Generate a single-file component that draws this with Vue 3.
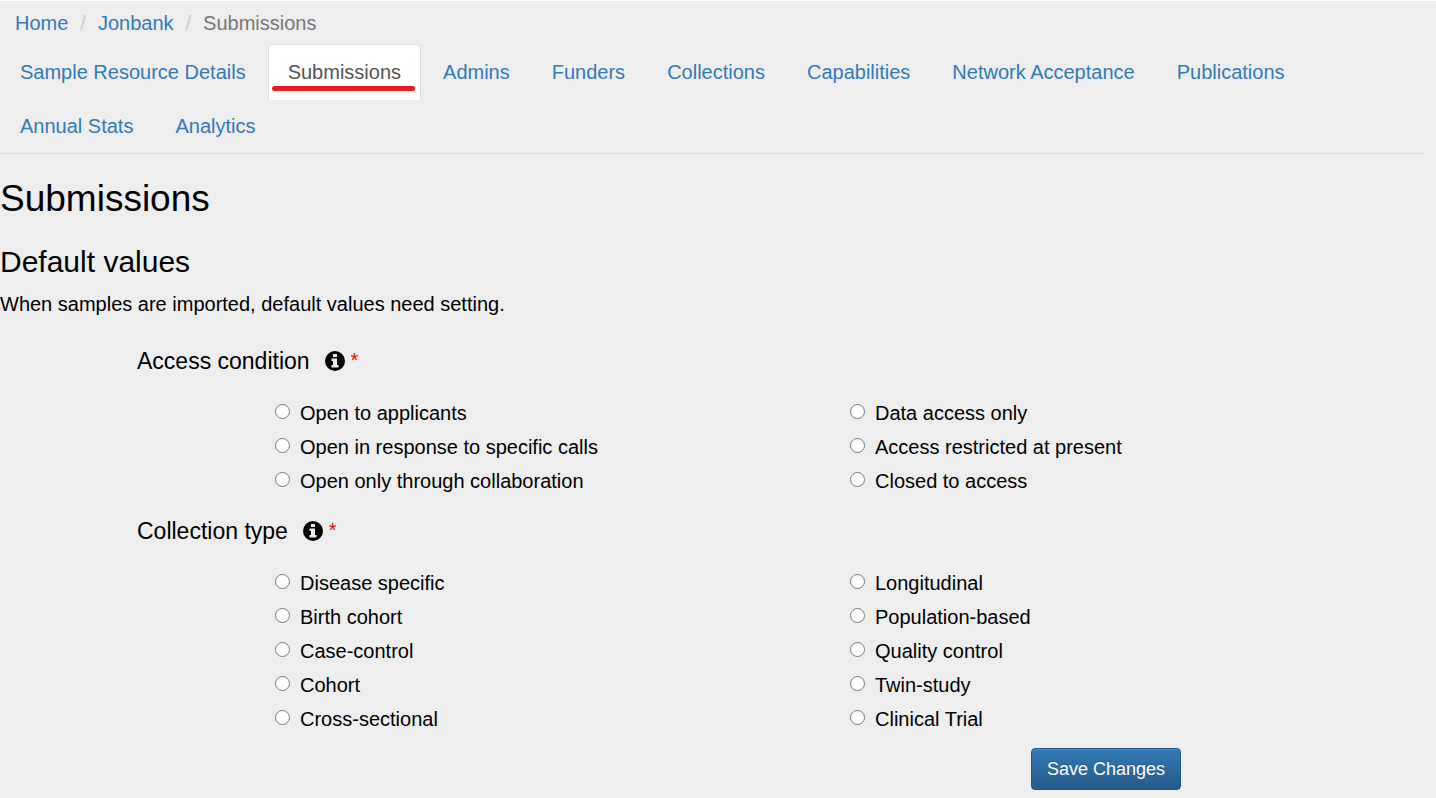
<script setup>
import { ref } from 'vue'

const tabs = [
  'Sample Resource Details',
  'Submissions',
  'Admins',
  'Funders',
  'Collections',
  'Capabilities',
  'Network Acceptance',
  'Publications',
  'Annual Stats',
  'Analytics',
]
const activeTab = 'Submissions'

const groups = [
  {
    name: 'access',
    title: 'Access condition',
    columns: [
      ['Open to applicants', 'Open in response to specific calls', 'Open only through collaboration'],
      ['Data access only', 'Access restricted at present', 'Closed to access'],
    ],
  },
  {
    name: 'type',
    title: 'Collection type',
    columns: [
      ['Disease specific', 'Birth cohort', 'Case-control', 'Cohort', 'Cross-sectional'],
      ['Longitudinal', 'Population-based', 'Quality control', 'Twin-study', 'Clinical Trial'],
    ],
  },
]
const chosen = ref({ access: '', type: '' })
</script>

<template>
  <div class="page">
    <nav aria-label="Breadcrumb">
      <ol class="breadcrumb">
        <li><a href="#">Home</a></li>
        <li><a href="#">Jonbank</a></li>
        <li class="current" aria-current="page">Submissions</li>
      </ol>
    </nav>

    <nav aria-label="Resource sections">
      <ul class="tabs">
        <li v-for="tab in tabs" :key="tab">
          <a href="#" :class="['tab', { active: tab === activeTab }]">{{ tab }}</a>
        </li>
      </ul>
    </nav>

    <main>
      <h1>Submissions</h1>
      <h2>Default values</h2>
      <p class="intro">When samples are imported, default values need setting.</p>

      <form @submit.prevent>
        <fieldset v-for="group in groups" :key="group.name">
          <legend>
            <span>{{ group.title }}</span>
            <svg class="info" viewBox="0 0 20 20" role="img" aria-label="Information">
              <circle cx="10" cy="10" r="10" fill="#000" />
              <path d="M8 3h4v3H8zM6.5 7.5H12V14h1.5v2.5h-7V14H8v-4H6.5z" fill="#eee" />
            </svg>
            <span class="required">*</span>
          </legend>
          <div class="options">
            <div v-for="(column, index) in group.columns" :key="index">
              <label v-for="option in column" :key="option" class="option">
                <input v-model="chosen[group.name]" type="radio" :name="group.name" :value="option" />
                <span>{{ option }}</span>
              </label>
            </div>
          </div>
        </fieldset>
        <div class="actions">
          <button type="submit">Save Changes</button>
        </div>
      </form>
    </main>
  </div>
</template>

<style>
body {
  background: #eee;
}
</style>

<style scoped>
.page {
  border-top: 1px solid #fff;
  padding-right: 11px;
  font-family: "Liberation Sans", Arial, sans-serif;
  font-size: 20px;
  line-height: 28px;
  color: #000;
}
a {
  color: #337ab7;
  text-decoration: none;
}
.breadcrumb {
  display: flex;
  margin: 0;
  padding: 8px 15px 7px;
  list-style: none;
}
.breadcrumb li + li::before {
  content: "/";
  padding: 0 12px;
  color: #ccc;
}
.breadcrumb .current {
  color: #777;
}
.tabs {
  display: flex;
  flex-wrap: wrap;
  margin: 0;
  padding: 0 0 1px;
  list-style: none;
  border-bottom: 1px solid #ddd;
}
.tabs li {
  height: 54px;
  margin-right: 2px;
}
.tab {
  display: block;
  height: 28px;
  padding: 13px 19px;
  border: 1px solid transparent;
  border-bottom: 0;
  border-radius: 5px 5px 0 0;
}
.tab.active {
  position: relative;
  padding-bottom: 14px;
  background: #fff;
  border-color: #ddd;
  color: #555;
}
.tab.active::after {
  content: "";
  position: absolute;
  left: 3px;
  right: 5px;
  bottom: 9px;
  height: 5px;
  border-radius: 3px;
  background: #ea1c1f;
}
h1,
h2 {
  margin: 0;
  font-weight: 400;
}
h1 {
  margin-top: 24px;
  font-size: 37px;
  line-height: 42px;
}
h2 {
  margin-top: 24px;
  font-size: 30px;
  line-height: 36px;
}
.intro {
  margin: 10px 0 29px;
}
fieldset {
  min-width: 0;
  margin: 0 0 19px;
  padding: 0;
  border: 0;
}
fieldset:last-of-type {
  margin-bottom: 12px;
}
legend {
  display: flex;
  align-items: center;
  margin: 0 0 21px 137px;
  padding: 0;
  font-size: 23px;
  line-height: 28px;
}
.info {
  width: 20px;
  height: 20px;
  margin: 0 6px 0 15px;
}
.required {
  padding-bottom: 2px;
  font-size: 20px;
  line-height: 26px;
  color: #f00;
}
.options {
  display: grid;
  grid-template-columns: 1fr 1fr;
  margin-left: 275px;
}
.option {
  display: flex;
  align-items: center;
  gap: 10px;
  height: 34px;
}
.option input {
  width: 15px;
  height: 15px;
  margin: 0 0 4px;
}
.actions {
  display: flex;
  justify-content: flex-end;
  padding-right: 244px;
}
button {
  height: 42px;
  padding: 0 15px;
  border: 1px solid #245580;
  border-radius: 4px;
  background: linear-gradient(#337ab7, #265a88);
  box-shadow: inset 0 1px 0 rgba(255, 255, 255, 0.15), 0 1px 1px rgba(0, 0, 0, 0.075);
  font-family: inherit;
  font-size: 18px;
  color: #fff;
  text-shadow: 0 -1px 0 rgba(0, 0, 0, 0.2);
}
</style>
